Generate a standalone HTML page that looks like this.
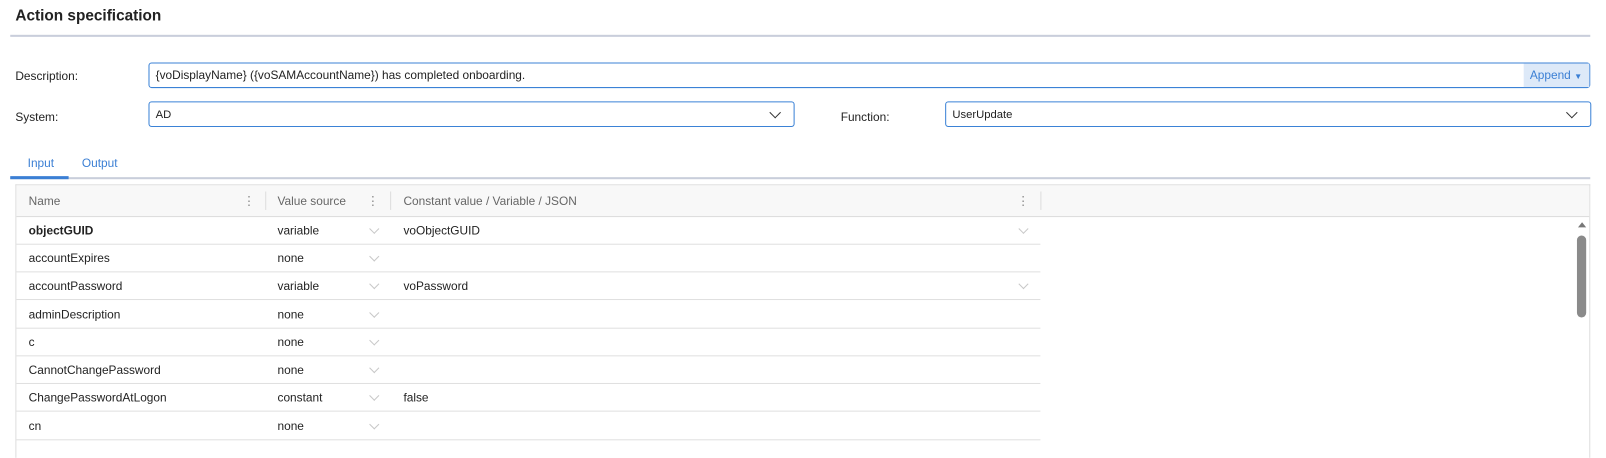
<!DOCTYPE html>
<html><head><style>
body{margin:0;width:1606px;height:447px;overflow:hidden;background:#fff;font-family:"Segoe UI","Liberation Sans",sans-serif;font-size:11.6px;color:#222;position:relative}
#w{position:absolute;left:0;top:0;width:1570px;height:440px;transform:scale(1.024);transform-origin:0 0}
.a{position:absolute;white-space:nowrap}
.inp{position:absolute;border:1px solid #3b82d6;border-radius:3px;box-sizing:border-box;background:#fff}
.row{position:absolute;left:16px;width:1000px;height:27px;border-bottom:1px solid #e0e0e0;box-sizing:border-box}
.row span{position:absolute;top:7px}
.chev{position:absolute;width:6px;height:6px;border-right:1px solid #c8c8c8;border-bottom:1px solid #c8c8c8;transform:rotate(45deg)}
.dots{position:absolute;color:#888;font-size:12px;line-height:12px}
</style></head><body><div id="w">
<div class="a" style="left:15px;top:7px;font-size:15px;font-weight:600;color:#222">Action specification</div>
<div class="a" style="left:10px;top:34px;width:1543px;height:2px;background:#c9cedb"></div>

<div class="a" style="left:15px;top:68px">Description:</div>
<div class="inp" style="left:145px;top:61px;width:1408px;height:25px">
 <div class="a" style="left:6px;top:5px;color:#222">{voDisplayName} ({voSAMAccountName}) has completed onboarding.</div>
 <div class="a" style="right:0;top:0;width:64px;height:23px;background:#dde9f8;color:#3b7fd4;line-height:23px;padding-left:6px;box-sizing:border-box">Append <span style="font-size:8px">▼</span></div>
</div>

<div class="a" style="left:15px;top:108px">System:</div>
<div class="inp" style="left:145px;top:99px;width:631px;height:25px">
 <div class="a" style="left:6px;top:6px;font-size:11px">AD</div>
 <div class="chev" style="right:14px;top:6px;border-color:#333;width:7px;height:7px"></div>
</div>
<div class="a" style="left:821px;top:108px">Function:</div>
<div class="inp" style="left:923px;top:99px;width:631px;height:25px">
 <div class="a" style="left:6px;top:6px;font-size:11px">UserUpdate</div>
 <div class="chev" style="right:14px;top:6px;border-color:#333;width:7px;height:7px"></div>
</div>

<div class="a" style="left:27px;top:153px;color:#3b7fd4">Input</div>
<div class="a" style="left:80px;top:153px;color:#3b7fd4">Output</div>
<div class="a" style="left:10px;top:173px;width:1543px;height:2px;background:#c9cedb"></div>
<div class="a" style="left:10px;top:172px;width:57px;height:3px;background:#3b7fd4"></div>

<div class="a" style="left:15px;top:180px;width:1538px;height:267px;border:1px solid #ddd;border-bottom:none;box-sizing:border-box"></div>
<div class="a" style="left:16px;top:181px;width:1536px;height:31px;background:#f8f8f8;border-bottom:1px solid #ddd;box-sizing:border-box"></div>
<div class="a" style="left:28px;top:190px;color:#666">Name</div>
<div class="dots" style="left:237px;top:190px">⋮</div>
<div class="a" style="left:259px;top:187px;width:1px;height:18px;background:#ddd"></div>
<div class="a" style="left:271px;top:190px;color:#666">Value source</div>
<div class="dots" style="left:358px;top:190px">⋮</div>
<div class="a" style="left:381px;top:187px;width:1px;height:18px;background:#ddd"></div>
<div class="a" style="left:394px;top:190px;color:#666">Constant value / Variable / JSON</div>
<div class="dots" style="left:993px;top:190px">⋮</div>
<div class="a" style="left:1016px;top:187px;width:1px;height:18px;background:#ddd"></div>

<div class="row" style="top:212px"><span style="left:12px;font-weight:bold">objectGUID</span><span style="left:255px">variable</span><i class="chev" style="left:346px;top:8px"></i><span style="left:378px">voObjectGUID</span><i class="chev" style="left:980px;top:8px"></i></div>
<div class="row" style="top:239px"><span style="left:12px">accountExpires</span><span style="left:255px">none</span><i class="chev" style="left:346px;top:8px"></i></div>
<div class="row" style="top:266px"><span style="left:12px">accountPassword</span><span style="left:255px">variable</span><i class="chev" style="left:346px;top:8px"></i><span style="left:378px">voPassword</span><i class="chev" style="left:980px;top:8px"></i></div>
<div class="row" style="top:294px"><span style="left:12px">adminDescription</span><span style="left:255px">none</span><i class="chev" style="left:346px;top:8px"></i></div>
<div class="row" style="top:321px"><span style="left:12px">c</span><span style="left:255px">none</span><i class="chev" style="left:346px;top:8px"></i></div>
<div class="row" style="top:348px"><span style="left:12px">CannotChangePassword</span><span style="left:255px">none</span><i class="chev" style="left:346px;top:8px"></i></div>
<div class="row" style="top:375px"><span style="left:12px">ChangePasswordAtLogon</span><span style="left:255px">constant</span><i class="chev" style="left:346px;top:8px"></i><span style="left:378px">false</span></div>
<div class="row" style="top:403px"><span style="left:12px">cn</span><span style="left:255px">none</span><i class="chev" style="left:346px;top:8px"></i></div>

<div class="a" style="left:1541px;top:217px;width:0;height:0;border-left:4px solid transparent;border-right:4px solid transparent;border-bottom:5px solid #777"></div>
<div class="a" style="left:1540px;top:230px;width:9px;height:80px;background:#8a8a8a;border-radius:5px"></div>
</div></body></html>
